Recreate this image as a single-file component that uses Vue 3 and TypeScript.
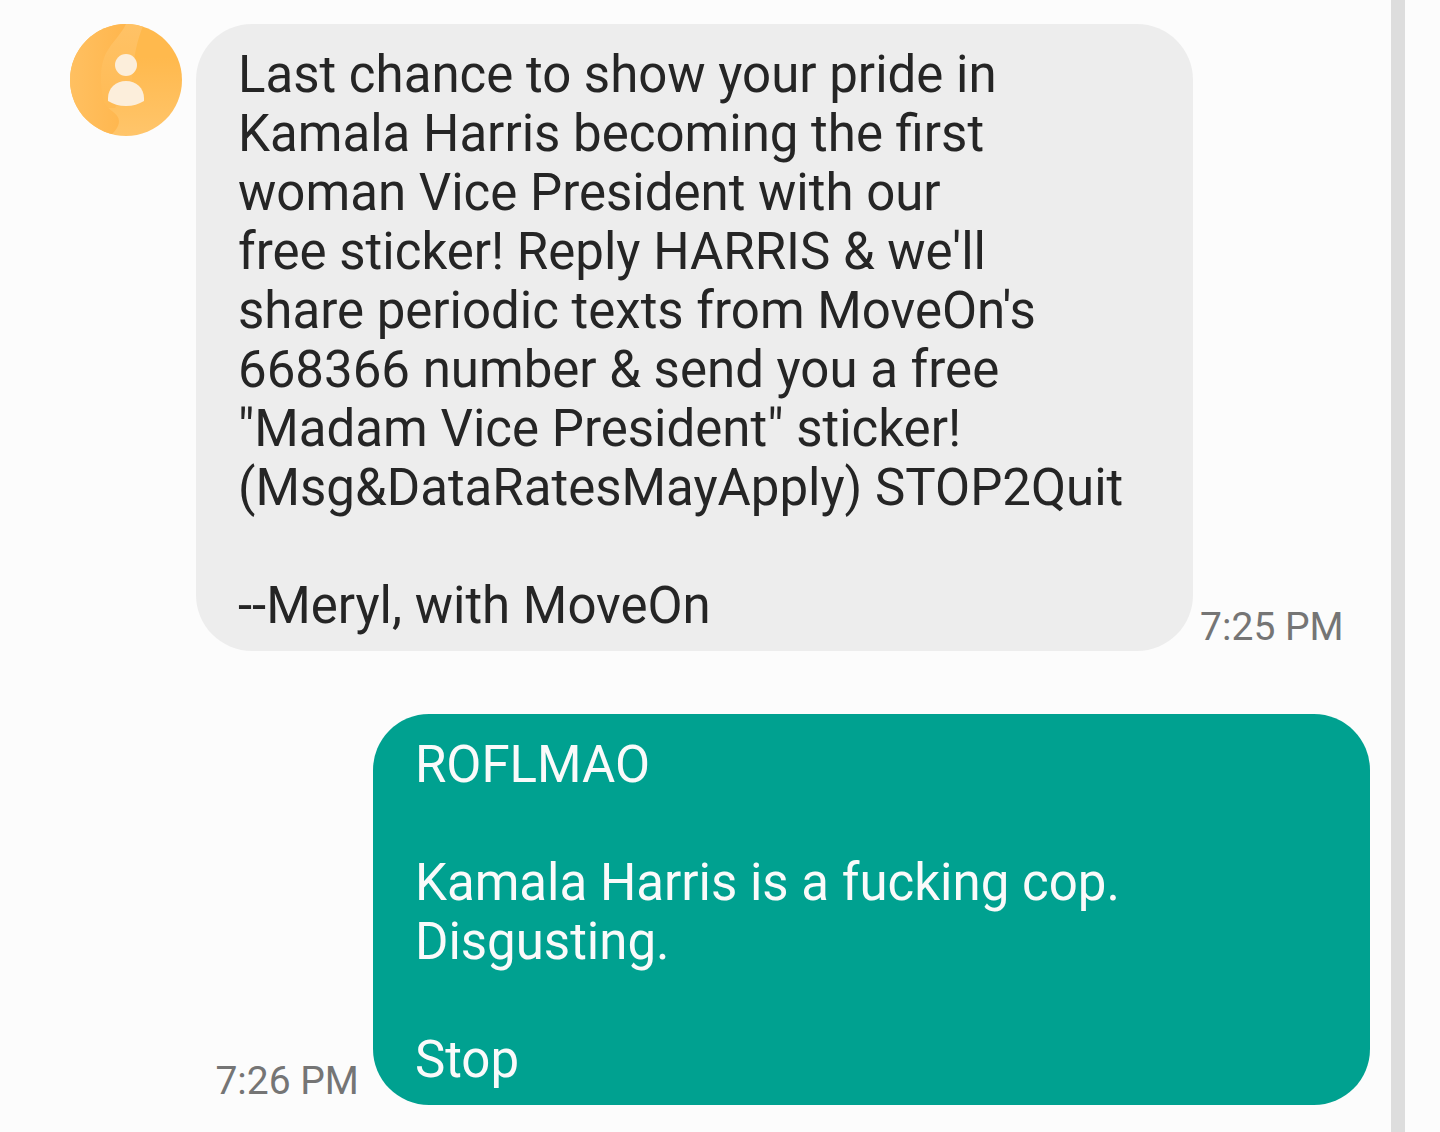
<script setup lang="ts">
interface Message {
  id: number
  direction: 'incoming' | 'outgoing'
  text: string
  time: string
}

const messages: Message[] = [
  {
    id: 1,
    direction: 'incoming',
    text: `Last chance to show your pride in
Kamala Harris becoming the first
woman Vice President with our
free sticker! Reply HARRIS & we'll
share periodic texts from MoveOn's
668366 number & send you a free
"Madam Vice President" sticker!
(Msg&DataRatesMayApply) STOP2Quit

--Meryl, with MoveOn`,
    time: '7:25 PM',
  },
  {
    id: 2,
    direction: 'outgoing',
    text: `ROFLMAO

Kamala Harris is a fucking cop.
Disgusting.

Stop`,
    time: '7:26 PM',
  },
]
</script>

<template>
  <div class="screen">
    <main class="thread">
      <article v-for="m in messages" :key="m.id" class="row" :class="m.direction">
        <svg v-if="m.direction === 'incoming'" class="avatar" viewBox="0 0 112 112" aria-hidden="true">
          <defs>
            <clipPath id="disc"><circle cx="56" cy="56" r="56" /></clipPath>
            <linearGradient id="base" x1="0" y1="0" x2="0" y2="1">
              <stop offset="0.3" stop-color="#ffb94d" />
              <stop offset="1" stop-color="#ffc56b" />
            </linearGradient>
            <linearGradient id="side" x1="0" y1="0" x2="1" y2="0">
              <stop offset="0" stop-color="#ffc061" />
              <stop offset="1" stop-color="#ffb64d" />
            </linearGradient>
            <linearGradient id="band" x1="0" y1="0" x2="0" y2="1">
              <stop offset="0" stop-color="#ffc266" />
              <stop offset="1" stop-color="#ffbb55" />
            </linearGradient>
          </defs>
          <g clip-path="url(#disc)">
            <rect width="112" height="112" fill="url(#base)" />
            <path d="M55 0H74C67 15 63 35 62 57L45 84H30V34Z" fill="url(#band)" />
            <path d="M56 0C51 11 38 22 34 34C29 47 31 67 34 78C37 86 49 89 49 97C49 104 44 107 41 112H0V0Z" fill="url(#side)" />
          </g>
          <circle cx="56" cy="41" r="11" fill="#fceedb" />
          <path d="M38 77V74C38 64 46 57 56 57S74 64 74 74V77C69 80 63 82 56 82S43 80 38 77Z" fill="#fceedb" />
        </svg>
        <p class="bubble">{{ m.text }}</p>
        <time class="time">{{ m.time }}</time>
      </article>
    </main>
    <div class="scrollbar"></div>
  </div>
</template>

<style>
body {
  background: #fcfcfc;
}
</style>

<style scoped>
.screen {
  display: flex;
  min-height: 100vh;
  padding-right: 35px;
  box-sizing: border-box;
  font-family: Roboto, sans-serif;
}
.thread {
  flex: 1;
  min-width: 0;
  display: flex;
  flex-direction: column;
  gap: 63px;
  padding: 24px 21px 27px 70px;
}
.row {
  display: flex;
  align-items: flex-end;
}
.outgoing {
  flex-direction: row-reverse;
}
.avatar {
  width: 112px;
  height: 112px;
  margin-right: 14px;
  flex: none;
  align-self: flex-start;
}
.bubble {
  box-sizing: border-box;
  width: 76.7%;
  margin: 0;
  padding: 21px 42px 16px;
  border-radius: 56px;
  font-size: 51px;
  line-height: 59px;
  white-space: pre-wrap;
}
.incoming .bubble {
  background: #ededed;
  color: #252525;
}
.outgoing .bubble {
  background: #00a190;
  color: #fafafa;
}
.time {
  flex: none;
  color: #757575;
  font-size: 39px;
  line-height: 48px;
}
.incoming .time {
  margin-left: 7px;
}
.outgoing .time {
  margin-right: 14px;
}
.scrollbar {
  flex: none;
  width: 14px;
  background: #dddddd;
}
</style>
